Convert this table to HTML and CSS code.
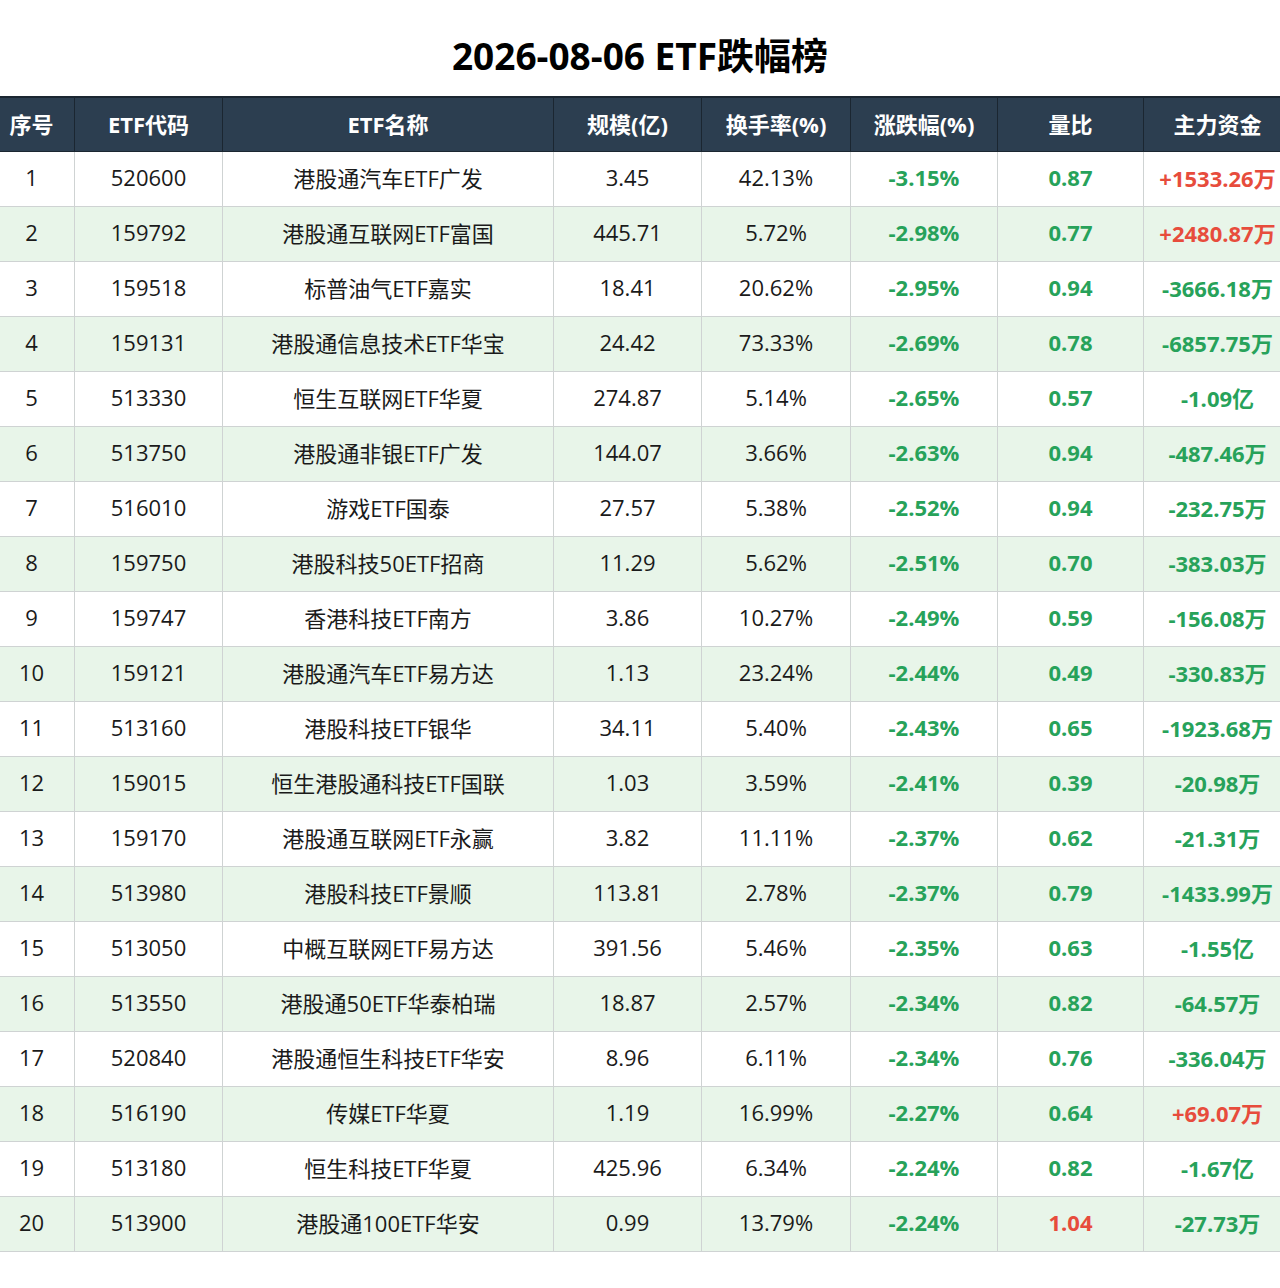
FILE: index.html
```html
<!DOCTYPE html>
<html lang="zh-CN">
<head>
<meta charset="utf-8">
<title>2026-08-06 ETF跌幅榜</title>
<link rel="stylesheet" href="styles.css">
</head>
<body>
<div class="page">
  <h1 class="title">2026-08-06 ETF跌幅榜</h1>
  <table class="rank">
    <colgroup>
      <col class="c-idx"><col class="c-code"><col class="c-name"><col class="c-scale"><col class="c-turn"><col class="c-chg"><col class="c-ratio"><col class="c-fund">
    </colgroup>
    <thead>
      <tr><th>序号</th><th>ETF代码</th><th>ETF名称</th><th>规模(亿)</th><th>换手率(%)</th><th>涨跌幅(%)</th><th>量比</th><th>主力资金</th></tr>
    </thead>
    <tbody>
      <tr><td>1</td><td>520600</td><td>港股通汽车ETF广发</td><td>3.45</td><td>42.13%</td><td class="b g">-3.15%</td><td class="b g">0.87</td><td class="b r">+1533.26万</td></tr>
      <tr><td>2</td><td>159792</td><td>港股通互联网ETF富国</td><td>445.71</td><td>5.72%</td><td class="b g">-2.98%</td><td class="b g">0.77</td><td class="b r">+2480.87万</td></tr>
      <tr><td>3</td><td>159518</td><td>标普油气ETF嘉实</td><td>18.41</td><td>20.62%</td><td class="b g">-2.95%</td><td class="b g">0.94</td><td class="b g">-3666.18万</td></tr>
      <tr><td>4</td><td>159131</td><td>港股通信息技术ETF华宝</td><td>24.42</td><td>73.33%</td><td class="b g">-2.69%</td><td class="b g">0.78</td><td class="b g">-6857.75万</td></tr>
      <tr><td>5</td><td>513330</td><td>恒生互联网ETF华夏</td><td>274.87</td><td>5.14%</td><td class="b g">-2.65%</td><td class="b g">0.57</td><td class="b g">-1.09亿</td></tr>
      <tr><td>6</td><td>513750</td><td>港股通非银ETF广发</td><td>144.07</td><td>3.66%</td><td class="b g">-2.63%</td><td class="b g">0.94</td><td class="b g">-487.46万</td></tr>
      <tr><td>7</td><td>516010</td><td>游戏ETF国泰</td><td>27.57</td><td>5.38%</td><td class="b g">-2.52%</td><td class="b g">0.94</td><td class="b g">-232.75万</td></tr>
      <tr><td>8</td><td>159750</td><td>港股科技50ETF招商</td><td>11.29</td><td>5.62%</td><td class="b g">-2.51%</td><td class="b g">0.70</td><td class="b g">-383.03万</td></tr>
      <tr><td>9</td><td>159747</td><td>香港科技ETF南方</td><td>3.86</td><td>10.27%</td><td class="b g">-2.49%</td><td class="b g">0.59</td><td class="b g">-156.08万</td></tr>
      <tr><td>10</td><td>159121</td><td>港股通汽车ETF易方达</td><td>1.13</td><td>23.24%</td><td class="b g">-2.44%</td><td class="b g">0.49</td><td class="b g">-330.83万</td></tr>
      <tr><td>11</td><td>513160</td><td>港股科技ETF银华</td><td>34.11</td><td>5.40%</td><td class="b g">-2.43%</td><td class="b g">0.65</td><td class="b g">-1923.68万</td></tr>
      <tr><td>12</td><td>159015</td><td>恒生港股通科技ETF国联</td><td>1.03</td><td>3.59%</td><td class="b g">-2.41%</td><td class="b g">0.39</td><td class="b g">-20.98万</td></tr>
      <tr><td>13</td><td>159170</td><td>港股通互联网ETF永赢</td><td>3.82</td><td>11.11%</td><td class="b g">-2.37%</td><td class="b g">0.62</td><td class="b g">-21.31万</td></tr>
      <tr><td>14</td><td>513980</td><td>港股科技ETF景顺</td><td>113.81</td><td>2.78%</td><td class="b g">-2.37%</td><td class="b g">0.79</td><td class="b g">-1433.99万</td></tr>
      <tr><td>15</td><td>513050</td><td>中概互联网ETF易方达</td><td>391.56</td><td>5.46%</td><td class="b g">-2.35%</td><td class="b g">0.63</td><td class="b g">-1.55亿</td></tr>
      <tr><td>16</td><td>513550</td><td>港股通50ETF华泰柏瑞</td><td>18.87</td><td>2.57%</td><td class="b g">-2.34%</td><td class="b g">0.82</td><td class="b g">-64.57万</td></tr>
      <tr><td>17</td><td>520840</td><td>港股通恒生科技ETF华安</td><td>8.96</td><td>6.11%</td><td class="b g">-2.34%</td><td class="b g">0.76</td><td class="b g">-336.04万</td></tr>
      <tr><td>18</td><td>516190</td><td>传媒ETF华夏</td><td>1.19</td><td>16.99%</td><td class="b g">-2.27%</td><td class="b g">0.64</td><td class="b r">+69.07万</td></tr>
      <tr><td>19</td><td>513180</td><td>恒生科技ETF华夏</td><td>425.96</td><td>6.34%</td><td class="b g">-2.24%</td><td class="b g">0.82</td><td class="b g">-1.67亿</td></tr>
      <tr><td>20</td><td>513900</td><td>港股通100ETF华安</td><td>0.99</td><td>13.79%</td><td class="b g">-2.24%</td><td class="b r">1.04</td><td class="b g">-27.73万</td></tr>
    </tbody>
  </table>
</div>
</body>
</html>
```

FILE: styles.css
```css
html, body {
  margin: 0;
  padding: 0;
  background: #ffffff;
}
body {
  font-family: "Open Sans", "Noto Sans CJK SC", sans-serif;
  color: #1a1a1a;
}
.page {
  width: 1280px;
  overflow: hidden;
  display: flex;
  flex-direction: column;
  align-items: center;
}
.title {
  margin: 0;
  width: 100%;
  height: 96px;
  display: flex;
  align-items: center;
  justify-content: center;
  padding-top: 12px;
  box-sizing: border-box;
  font-size: 37px;
  font-weight: 700;
  color: #000000;
}
.rank {
  flex: none;
  width: 1303px;
  table-layout: fixed;
  border-collapse: collapse;
  font-size: 22px;
}
.c-idx { width: 86px; }
.c-code { width: 148px; }
.c-name { width: 331px; }
.c-scale { width: 148px; }
.c-turn { width: 149px; }
.c-chg { width: 147px; }
.c-ratio { width: 146px; }
.c-fund { width: 148px; }

.rank th {
  height: 54px;
  background: #2c3e50;
  color: #ffffff;
  font-weight: 700;
  border: 1px solid #1b2631;
  border-top: 2px solid #1b2631;
  padding: 0 0 3px;
  box-sizing: border-box;
  text-align: center;
  white-space: nowrap;
}
.rank td {
  height: 51px;
  padding: 0 0 3px;
  text-align: center;
  border: 1px solid #cfd3d3;
  white-space: nowrap;
}
.rank tbody tr:nth-child(even) td {
  background: #e8f5e9;
}
.b { font-weight: 700; }
.g { color: #27a25a; }
.r { color: #e74c3c; }
```
